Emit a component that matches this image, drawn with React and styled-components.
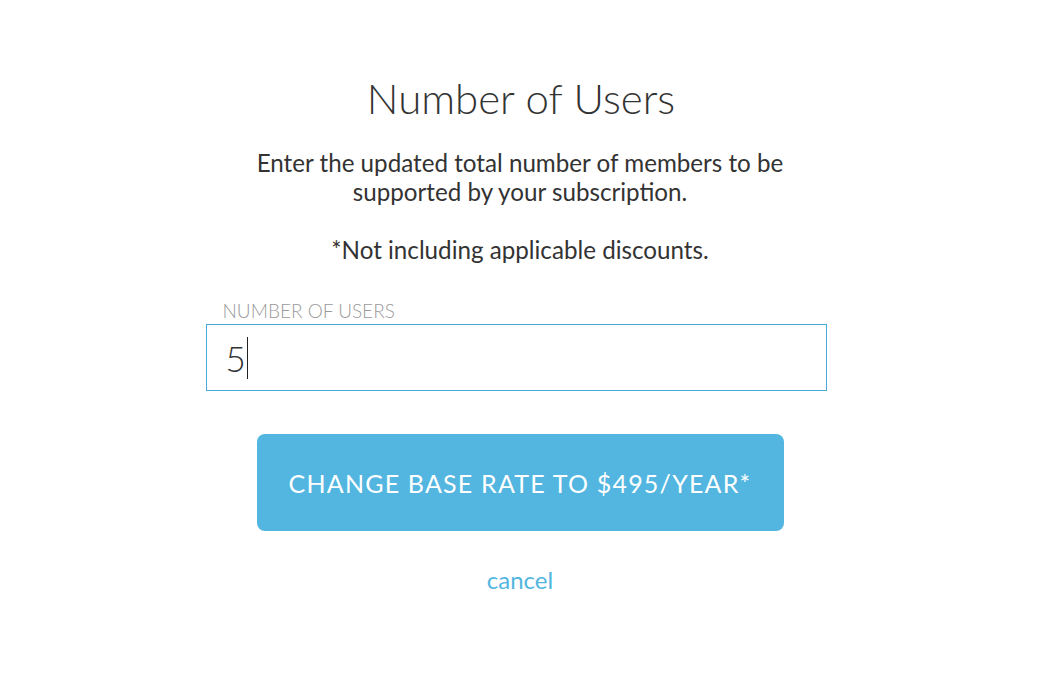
import React from "react";
import styled, { createGlobalStyle } from "styled-components";

const GlobalStyle = createGlobalStyle`
    html, body {
        margin: 0;
        padding: 0;
        background: #fff;
    }
    body {
        font-family: Lato, "Open Sans", sans-serif;
        color: #333;
    }
`;

const App = () => {
    return (
        <>
            <GlobalStyle />
            <Page>
                <Title>Number of Users</Title>
                <Description>
                    Enter the updated total number of members to be
                    <br />
                    supported by your subscription.
                </Description>
                <Note>*Not including applicable discounts.</Note>
                <Field>
                    <FieldLabel>Number of users</FieldLabel>
                    <FieldBox>
                        <FieldValue>5</FieldValue>
                        <Caret />
                    </FieldBox>
                </Field>
                <SubmitButton>Change base rate to $495/year*</SubmitButton>
                <CancelLink href="#">cancel</CancelLink>
            </Page>
        </>
    );
};

export default App;

const Page = styled.main`
    display: flex;
    flex-direction: column;
    align-items: center;
    width: 1040px;
    padding-top: 72px;
`;

const Title = styled.h1`
    margin: 0 0 0 2px;
    font-size: 42px;
    font-weight: 300;
    line-height: 52px;
    color: #333;
`;

const Description = styled.p`
    margin: 24px 0 0;
    font-size: 24.2px;
    line-height: 29px;
    text-align: center;
`;

const Note = styled.p`
    margin: 29px 0 0;
    font-size: 24.2px;
    line-height: 29px;
    text-align: center;
`;

/* 입력 영역 */
const Field = styled.div`
    display: flex;
    flex-direction: column;
    width: 621px;
    margin: 38px 8px 0 0;
`;

const FieldLabel = styled.label`
    padding-left: 17px;
    margin-bottom: 4px;
    font-size: 19px;
    font-weight: 300;
    line-height: 18px;
    text-transform: uppercase;
    color: #9a9a9a;
`;

const FieldBox = styled.div`
    display: flex;
    align-items: center;
    box-sizing: border-box;
    height: 67px;
    padding: 0 19px;
    border: 1px solid #4ba9d9;
`;

const FieldValue = styled.span`
    font-size: 35px;
    font-weight: 300;
    color: #333;
`;

const Caret = styled.span`
    display: inline-block;
    width: 1px;
    height: 42px;
    margin-left: 1px;
    background: #222;
`;

/* 버튼 영역 */
const SubmitButton = styled.button`
    width: 527px;
    height: 97px;
    margin-top: 43px;
    border: none;
    border-radius: 8px;
    background: #52b6e0;
    color: #fff;
    font-family: Lato, sans-serif;
    font-size: 25px;
    font-weight: 400;
    letter-spacing: 1.2px;
    text-transform: uppercase;
    cursor: pointer;
`;

const CancelLink = styled.a`
    margin-top: 34px;
    font-size: 24px;
    line-height: 29px;
    color: #52b6e0;
    text-decoration: none;
`;
